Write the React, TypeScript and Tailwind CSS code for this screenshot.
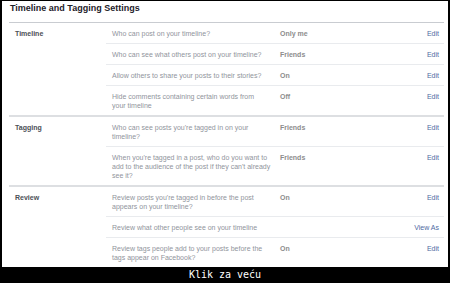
const sections = [
  {
    label: "Timeline",
    rows: [
      { q: ["Who can post on your timeline?"], v: "Only me", a: "Edit" },
      { q: ["Who can see what others post on your timeline?"], v: "Friends", a: "Edit" },
      { q: ["Allow others to share your posts to their stories?"], v: "On", a: "Edit" },
      {
        q: ["Hide comments containing certain words from", "your timeline"],
        v: "Off",
        a: "Edit",
      },
    ],
  },
  {
    label: "Tagging",
    rows: [
      { q: ["Who can see posts you're tagged in on your", "timeline?"], v: "Friends", a: "Edit" },
      {
        q: [
          "When you're tagged in a post, who do you want to",
          "add to the audience of the post if they can't already",
          "see it?",
        ],
        v: "Friends",
        a: "Edit",
      },
    ],
  },
  {
    label: "Review",
    rows: [
      {
        q: ["Review posts you're tagged in before the post", "appears on your timeline?"],
        v: "On",
        a: "Edit",
      },
      { q: ["Review what other people see on your timeline"], v: "", a: "View As" },
      {
        q: ["Review tags people add to your posts before the", "tags appear on Facebook?"],
        v: "On",
        a: "Edit",
      },
    ],
  },
];

export default function App() {
  return (
    <div className="w-[450px] h-[283px] bg-black flex flex-col overflow-hidden">
      <div
        className="mx-[2px] mt-[1px] h-[266px] shrink-0 bg-white overflow-hidden"
        style={{ fontFamily: '"Liberation Sans", Arial, sans-serif' }}
      >
        {/* header */}
        <div className="pt-[2px] h-[22px] border-b border-[#c9ccd1] ml-[7px] mr-[4px]">
          <h1 className="text-[9px] leading-[11px] font-bold text-[#1d2129] pl-[1px]">
            Timeline and Tagging Settings
          </h1>
        </div>

        <div className="ml-[7px] mr-[4px]">
          {sections.map((s, si) => (
            <div
              key={s.label}
              className={
                si < sections.length - 1
                  ? "flex border-b-2 border-[#dddfe2]"
                  : "flex"
              }
            >
              <div className="w-[97px] shrink-0 pl-[6px] pt-[6px] text-[7px] leading-[9px] font-bold text-[#4b4f56]">
                {s.label}
              </div>
              <div className="flex-1">
                {s.rows.map((r, ri) => (
                  <div
                    key={ri}
                    className={
                      ri < s.rows.length - 1
                        ? "flex pl-[6px] pr-[5px] pt-[6px] pb-[5px] border-b border-[#e9ebee] text-[7px] leading-[9px]"
                        : "flex pl-[6px] pr-[5px] pt-[6px] pb-[5px] text-[7px] leading-[9px]"
                    }
                  >
                    <div className="w-[168px] shrink-0 text-[#90949c] whitespace-nowrap">
                      {r.q.map((line, li) => (
                        <div key={li}>{line}</div>
                      ))}
                    </div>
                    <div className="flex-1 font-bold text-[#8d8d8d]">{r.v}</div>
                    <div className="text-[#4e69a2]">{r.a}</div>
                  </div>
                ))}
              </div>
            </div>
          ))}
        </div>
      </div>

      <div className="flex-1 flex items-center justify-center text-white text-[10px] leading-[12px] font-['DejaVu_Sans_Mono',monospace]">
        Klik za veću
      </div>
    </div>
  );
}
